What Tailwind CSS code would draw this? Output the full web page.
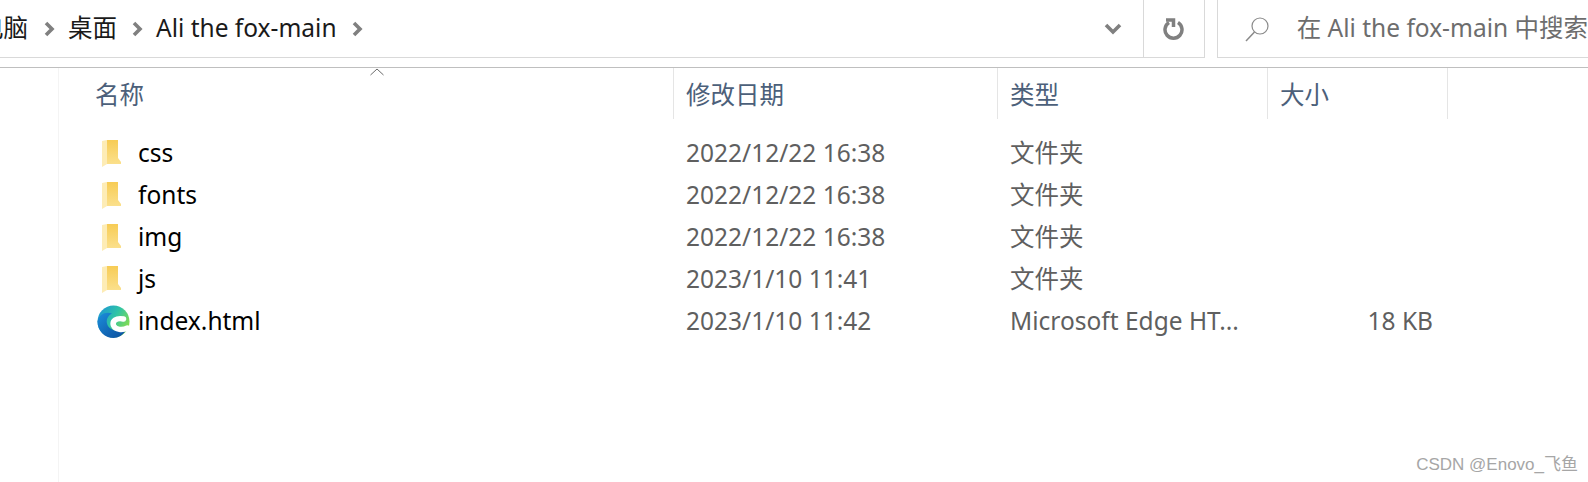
<!DOCTYPE html>
<html lang="zh-CN">
<head>
  <meta charset="UTF-8">
  <title>Ali the fox-main</title>
  <script src="https://cdn.jsdelivr.net/npm/@tailwindcss/browser@4"></script>
</head>
<body class="bg-white overflow-hidden">
  <div class="relative w-[1588px] h-[482px] overflow-hidden bg-white font-['Noto_Sans','Noto_Sans_CJK_SC',sans-serif] text-[24.5px]">

    <!-- address bar + search -->
    <div class="flex h-[58px]">
      <div class="w-[1205px] flex items-center border-b border-r border-[#d9d9d9] text-[#1a1a1a]">
        <div class="flex-1 flex items-center -ml-[21px]">
          <span class="w-[49px] text-right">电脑</span>
          <svg class="ml-[16px]" width="11" height="16" viewBox="0 0 11 16"><path d="M2 2l6 6-6 6" fill="none" stroke="#808080" stroke-width="3.600"/></svg>
          <span class="ml-[13px] w-[48px] whitespace-nowrap">桌面</span>
          <svg class="ml-[16px]" width="11" height="16" viewBox="0 0 11 16"><path d="M2 2l6 6-6 6" fill="none" stroke="#808080" stroke-width="3.600"/></svg>
          <span class="ml-[13px] w-[182px] whitespace-nowrap">Ali the fox-main</span>
          <svg class="ml-[14px]" width="11" height="16" viewBox="0 0 11 16"><path d="M2 2l6 6-6 6" fill="none" stroke="#808080" stroke-width="3.600"/></svg>
        </div>
        <svg class="mr-[21px]" width="18" height="12" viewBox="0 0 18 12"><path d="M2 2l7 7 7-7" fill="none" stroke="#808080" stroke-width="3.600"/></svg>
        <div class="w-[61px] h-full border-l border-[#d9d9d9] flex items-center justify-center">
          <svg width="22" height="24" viewBox="0 0 22 24"><path d="M6 5.500a8.500 8.500 0 1 0 9 0" fill="none" stroke="#808080" stroke-width="3.500"/><path d="M3 3h7.500v7" fill="none" stroke="#808080" stroke-width="3.500"/></svg>
        </div>
      </div>
      <div class="ml-[12px] flex-1 flex items-center border-l border-b border-[#d9d9d9] whitespace-nowrap text-[#6d6d6d]">
        <svg class="ml-[26px]" width="26" height="26" viewBox="0 0 26 26"><circle cx="16" cy="10" r="8" fill="none" stroke="#8a8a8a" stroke-width="1.200"/><path d="M10.500 16L2 25" fill="none" stroke="#8a8a8a" stroke-width="1.500"/></svg>
        <span class="ml-[27px]">在 Ali the fox-main 中搜索</span>
      </div>
    </div>

    <!-- file list -->
    <div class="mt-[9px] flex h-[415px] border-t border-[#bfbfbf]">
      <div class="w-[59px] shrink-0 border-r border-[#f4f4f4]"></div>
      <div class="relative flex-1">
        <svg class="absolute left-[311px] top-0" width="14" height="8" viewBox="0 0 14 8"><path d="M.5 7L7 1l6.500 6" fill="none" stroke="#6b6b6b"/></svg>

        <div class="grid grid-cols-[615px_324px_270px_180px] grid-rows-[51px] h-[51px] text-[#4c607a]">
          <div class="pl-[36px] border-r border-[#e5e5e5] leading-[54px]">名称</div>
          <div class="pl-[12px] border-r border-[#e5e5e5] leading-[54px]">修改日期</div>
          <div class="pl-[12px] border-r border-[#e5e5e5] leading-[54px]">类型</div>
          <div class="pl-[12px] border-r border-[#e5e5e5] leading-[54px]">大小</div>
        </div>

        <div class="mt-[13px] text-[#5f5f5f]">
          <div class="grid grid-cols-[615px_324px_270px_180px] h-[42px] items-center">
            <div class="flex items-center pl-[43px] text-black">
              <svg width="19" height="27" viewBox="0 0 19 27">
                <defs>
                  <linearGradient id="folderFill" x1="0" y1="0" x2="0" y2="1"><stop offset="0" stop-color="#f7cc55"/><stop offset="1" stop-color="#fbe08c"/></linearGradient>
                </defs>
                <path d="M5 0h11v18l3 4v2H5z" fill="url(#folderFill)"/>
                <path d="M0 1l5-1v24l-5 3z" fill="#fdecb6"/>
              </svg>
              <span class="ml-[17px]">css</span>
            </div>
            <div class="pl-[12px]">2022/12/22 16:38</div>
            <div class="pl-[12px]">文件夹</div>
            <div></div>
          </div>
          <div class="grid grid-cols-[615px_324px_270px_180px] h-[42px] items-center">
            <div class="flex items-center pl-[43px] text-black">
              <svg width="19" height="27" viewBox="0 0 19 27"><path d="M5 0h11v18l3 4v2H5z" fill="url(#folderFill)"/><path d="M0 1l5-1v24l-5 3z" fill="#fdecb6"/></svg>
              <span class="ml-[17px]">fonts</span>
            </div>
            <div class="pl-[12px]">2022/12/22 16:38</div>
            <div class="pl-[12px]">文件夹</div>
            <div></div>
          </div>
          <div class="grid grid-cols-[615px_324px_270px_180px] h-[42px] items-center">
            <div class="flex items-center pl-[43px] text-black">
              <svg width="19" height="27" viewBox="0 0 19 27"><path d="M5 0h11v18l3 4v2H5z" fill="url(#folderFill)"/><path d="M0 1l5-1v24l-5 3z" fill="#fdecb6"/></svg>
              <span class="ml-[17px]">img</span>
            </div>
            <div class="pl-[12px]">2022/12/22 16:38</div>
            <div class="pl-[12px]">文件夹</div>
            <div></div>
          </div>
          <div class="grid grid-cols-[615px_324px_270px_180px] h-[42px] items-center">
            <div class="flex items-center pl-[43px] text-black">
              <svg width="19" height="27" viewBox="0 0 19 27"><path d="M5 0h11v18l3 4v2H5z" fill="url(#folderFill)"/><path d="M0 1l5-1v24l-5 3z" fill="#fdecb6"/></svg>
              <span class="ml-[17px]">js</span>
            </div>
            <div class="pl-[12px]">2023/1/10 11:41</div>
            <div class="pl-[12px]">文件夹</div>
            <div></div>
          </div>
          <div class="grid grid-cols-[615px_324px_270px_180px] h-[42px] items-center">
            <div class="flex items-center pl-[38px] text-black">
              <svg width="33" height="33" viewBox="0 0 33 33">
                <defs>
                  <linearGradient id="edgeTop" x1="0" y1="0" x2="1" y2="0.600"><stop offset="0" stop-color="#1a8fdc"/><stop offset="0.55" stop-color="#2fc4a6"/><stop offset="1" stop-color="#86dc4e"/></linearGradient>
                  <linearGradient id="edgeBottom" x1="0" y1="0" x2="1" y2="1"><stop offset="0" stop-color="#1b90dc"/><stop offset="0.6" stop-color="#1265b4"/><stop offset="1" stop-color="#0c4f9c"/></linearGradient>
                </defs>
                <circle cx="16.500" cy="16.500" r="16" fill="url(#edgeTop)"/>
                <path d="M.5 16.500C2 9 9 6 15 8.500c-4 2-6 6-5 10 1.500 6 9 9 19 7C26 30 21.500 33 16.500 33 7.500 33 .5 25.500 .5 16.500z" fill="url(#edgeBottom)"/>
                <path d="M26.500 14C19 12.500 15 16 16.500 20.500c2 4.500 9 5 14 2.500" fill="none" stroke="#fff" stroke-width="5.500" stroke-linecap="round"/>
              </svg>
              <span class="ml-[8px]">index.html</span>
            </div>
            <div class="pl-[12px]">2023/1/10 11:42</div>
            <div class="pl-[12px] whitespace-nowrap">Microsoft Edge HT...</div>
            <div class="text-right pr-[15px]">18 KB</div>
          </div>
        </div>
      </div>
    </div>

    <!-- watermark -->
    <div class="absolute right-[10px] top-[455px] text-[17px] leading-[20px] text-[#a6a6a6] font-['Liberation_Sans','Noto_Sans_CJK_SC',sans-serif] whitespace-nowrap">CSDN @Enovo_飞鱼</div>
  </div>
</body>
</html>
